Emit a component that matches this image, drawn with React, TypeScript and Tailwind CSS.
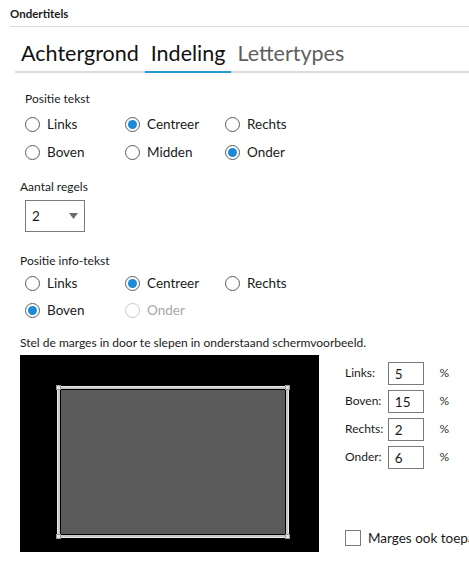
import { useState } from "react";

type RadioProps = {
  label: string;
  checked?: boolean;
  disabled?: boolean;
};

const Radio = ({ label, checked, disabled }: RadioProps) => {
  return (
    <div className="flex items-center w-[100px] h-[27px]">
      <span
        className={`flex items-center justify-center w-[15px] h-[15px] rounded-full border bg-white ${
          disabled ? "border-[#c8c8c8]" : "border-[#5c5c5c]"
        }`}
      >
        {checked && <span className="w-[9px] h-[9px] rounded-full bg-[#1c8ad6]" />}
      </span>
      <span
        className={`ml-[7px] text-[13.5px] ${
          disabled ? "text-[#a8a8a8]" : "text-[#1a1a1a]"
        }`}
      >
        {label}
      </span>
    </div>
  );
};

const MarginField = ({ label, value }: { label: string; value: string }) => {
  return (
    <div className="flex items-center h-[28px]">
      <span className="w-[48px] text-[12px] text-[#1a1a1a]">{label}</span>
      <div className="w-[40px] h-[23px] border border-[#7a7a7a] bg-white flex items-center pl-[6px] pt-[2px] text-[13.5px]">
        {value}
      </div>
      <span className="ml-[15px] text-[12px] text-[#333]">%</span>
    </div>
  );
};

const App = () => {
  const [tab] = useState("Indeling");
  const tabs = ["Achtergrond", "Indeling", "Lettertypes"];

  return (
    <div
      className="w-[469px] h-[567px] overflow-hidden bg-white text-[#1a1a1a]"
      style={{ fontFamily: 'Lato, "Noto Sans", sans-serif' }}
    >
      <div className="ml-[10px] h-[27px] border-b border-[#dadada] pt-[5px] text-[11.5px] font-bold">
        Ondertitels
      </div>

      <div className="ml-[15px] mt-[9px] flex border-b-2 border-[#dcdcdc]">
        {tabs.map((t) => (
          <div
            key={t}
            className={`px-[6px] -mb-[2px] border-b-2 text-[21.5px] leading-[35px] ${
              t === tab
                ? "border-[#2a9ad4] text-[#111]"
                : "border-transparent " + (t === "Lettertypes" ? "text-[#5f5f5f]" : "text-[#111]")
            }`}
          >
            {t}
          </div>
        ))}
      </div>

      <div className="px-[20px]">
        <div className="mt-[17px] pl-[5px] text-[12px]">Positie tekst</div>
        <div className="pl-[5px] mt-[3px] grid grid-cols-[100px_100px_100px] auto-rows-[28px]">
          <Radio label="Links" />
          <Radio label="Centreer" checked />
          <Radio label="Rechts" />
          <Radio label="Boven" />
          <Radio label="Midden" />
          <Radio label="Onder" checked />
        </div>

        <div className="mt-[11px] text-[12px]">Aantal regels</div>
        <div className="mt-[4px] ml-[5px] w-[60px] h-[32px] border border-[#7a7a7a] flex items-center justify-between pl-[6px] pr-[6px] text-[13.5px]">
          <span>2</span>
          <svg width="9" height="6" viewBox="0 0 9 6">
            <path d="M0 0 L9 0 L4.5 6 Z" fill="#6d6d6d" />
          </svg>
        </div>

        <div className="mt-[20px] text-[12px]">Positie info-tekst</div>
        <div className="pl-[5px] grid grid-cols-[100px_100px_100px] auto-rows-[27px]">
          <Radio label="Links" />
          <Radio label="Centreer" checked />
          <Radio label="Rechts" />
          <Radio label="Boven" checked />
          <Radio label="Onder" disabled />
        </div>

        <div className="mt-[10px] text-[12px]">
          Stel de marges in door te slepen in onderstaand schermvoorbeeld.
        </div>

        <div className="mt-[3px] flex">
          <div className="shrink-0 w-[299px] h-[197px] bg-black pt-[32px] pl-[38px] relative">
            <div className="w-[230px] h-[150px] border-2 border-[#c8c8c8] bg-[#5a5a5a] outline outline-1 outline-[#e8e8e8] relative">
              <div className="absolute inset-0 border border-black" />
              <span className="absolute -left-[4px] -top-[4px] w-[5px] h-[5px] bg-[#e6e6e6] border border-[#9a9a9a]" />
              <span className="absolute -right-[4px] -top-[4px] w-[5px] h-[5px] bg-[#e6e6e6] border border-[#9a9a9a]" />
              <span className="absolute -left-[4px] -bottom-[4px] w-[5px] h-[5px] bg-[#e6e6e6] border border-[#9a9a9a]" />
              <span className="absolute -right-[4px] -bottom-[4px] w-[5px] h-[5px] bg-[#e6e6e6] border border-[#9a9a9a]" />
            </div>
          </div>

          <div className="ml-[26px] flex flex-col min-w-0">
            <div className="mt-[4px]">
              <MarginField label="Links:" value="5" />
              <MarginField label="Boven:" value="15" />
              <MarginField label="Rechts:" value="2" />
              <MarginField label="Onder:" value="6" />
            </div>
            <div className="mt-auto mb-[4px] flex items-center whitespace-nowrap">
              <span className="shrink-0 w-[16px] h-[16px] border border-[#7a7a7a] bg-white" />
              <span className="ml-[7px] text-[13.5px]">Marges ook toepassen</span>
            </div>
          </div>
        </div>
      </div>
    </div>
  );
};

export default App;
